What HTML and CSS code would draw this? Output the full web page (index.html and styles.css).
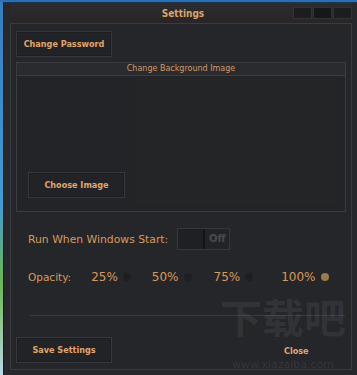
FILE: index.html
```html
<!DOCTYPE html>
<html>
<head>
<meta charset="utf-8">
<link rel="stylesheet" href="styles.css">
</head>
<body>
<div class="desktop">
  <div class="stripe"></div>
  <div class="window">
    <div class="titlebar">
      <span class="title">Settings</span>
      <div class="winbtns"><span></span><span></span><span></span></div>
    </div>
    <div class="panel">
      <button class="btn pw">Change Password</button>
      <div class="group">
        <div class="group-head">Change Background Image</div>
        <div class="group-body">
          <div class="preview"></div>
          <button class="btn choose">Choose Image</button>
        </div>
      </div>
      <div class="run-row">
        <span class="label">Run When Windows Start:</span>
        <div class="toggle"><span class="knob"></span><span class="off">Off</span></div>
      </div>
      <div class="op-row">
        <span class="label op-label">Opacity:</span>
        <span class="opt o1">25%<i class="dot"></i></span>
        <span class="opt o2">50%<i class="dot"></i></span>
        <span class="opt o3">75%<i class="dot"></i></span>
        <span class="opt o4">100%<i class="dot on"></i></span>
      </div>
      <div class="sep"></div>
      <div class="bottom-row">
        <button class="btn save">Save Settings</button>
        <span class="close">Close</span>
      </div>
      <div class="wm">
        <span class="wm-big">下载吧</span>
        <span class="wm-url">www.xiazaiba.com</span>
      </div>
    </div>
  </div>
</div>
</body>
</html>
```
FILE: styles.css
```css
* { box-sizing: border-box; }
html, body { margin: 0; padding: 0; }
body {
  width: 357px; height: 375px; overflow: hidden;
  background: #2a6fb3;
  font-family: "DejaVu Sans", Verdana, sans-serif;
}
.desktop { display: flex; height: 375px; padding-top: 2px; }
.stripe {
  width: 3px; flex: none;
  background: linear-gradient(#2f7fc4 0%, #39a0d8 55%, #6bb84a 75%, #b8d8e8 100%);
}
.window {
  flex: 1; display: flex; flex-direction: column;
  background: #27282c;
  border-top: 1px solid #1c3550;
  border-left: 1px solid #1a1b1e;
  padding: 0 5px 5px 6px;
}
.titlebar {
  height: 20px; flex: none; position: relative;
  display: flex; align-items: center; justify-content: center;
  background: linear-gradient(#2b2c30, #2a2526);
}
.title {
  color: #d9a46c; font-weight: bold; font-size: 10px; margin-left: 4px;
  font-family: "DejaVu Sans Condensed", "DejaVu Sans", sans-serif;
}
.winbtns {
  position: absolute; right: 0; top: 4px; display: flex; gap: 1px;
}
.winbtns span {
  width: 19px; height: 12px; background: #1c1d20; border: 1px solid #323338;
}
.winbtns span:nth-child(2) { background: #161719; }
.panel {
  flex: 1; position: relative;
  border: 1px solid #3a3b40;
  background: #25262a;
  padding: 7px 5px 0 5px;
  display: flex; flex-direction: column;
}
.btn {
  font-family: "DejaVu Sans Condensed", "DejaVu Sans", sans-serif;
  font-weight: bold; font-size: 9px; color: #e0a56c;
  background: #222327;
  border: 1px solid #37383d;
  box-shadow: inset 0 0 0 1px #1c1d20;
  height: 26px; padding: 0; text-align: center;
}
.pw { width: 96px; }
.group {
  margin-top: 5px; width: 330px;
  border: 1px solid #3b3c41;
  display: flex; flex-direction: column;
}
.group-head {
  height: 13px; line-height: 12px; text-align: center;
  font-size: 8px; color: #d39a66;
  background: #2a2b2f; border-bottom: 1px solid #3d3e43;
}
.group-body {
  height: 135px; position: relative; display: flex; align-items: flex-end;
  padding: 0 0 13px 11px; background: #232427;
}
.preview {
  position: absolute; left: 118px; top: 2px; right: 8px; bottom: 6px;
  background: #242527;
}
.choose { width: 97px; position: relative; }
.run-row {
  display: flex; align-items: center; margin-top: 16px; padding-left: 12px; height: 22px;
}
.label { color: #d8995c; font-size: 10.8px; }
.op-label { font-size: 10.5px; }
.toggle {
  margin-left: 9px; width: 53px; height: 22px; display: flex;
  border: 1px solid #36373b; background: #222327;
}
.knob { width: 27px; background: #1f2023; border-right: 2px solid #141517; }
.off { flex: 1; color: #4a4b50; font-size: 10px; font-weight: bold; line-height: 20px; text-align: center; }
.op-row {
  display: flex; align-items: center; margin-top: 18px; padding-left: 12px; height: 18px;
}
.opt { color: #d8995c; font-size: 12px; display: flex; align-items: center; }
.o1 { margin-left: 20px; }
.o2 { margin-left: 21px; }
.o3 { margin-left: 22px; }
.o4 { margin-left: 28px; }
.dot {
  width: 8px; height: 8px; border-radius: 50%; background: #1e1f22;
  margin-left: 5px; display: inline-block;
}
.dot.on { background: #9a7c4c; }
.sep {
  margin: 29px 0 0 14px; width: 315px; height: 1px; background: #3a3b40; flex: none;
}
.bottom-row {
  display: flex; align-items: center; margin-top: 21px;
}
.save { width: 96px; }
.close {
  margin-left: 172px; padding-top: 3px; line-height: 11px; font-weight: bold; font-size: 9px; color: #e0a56c;
  font-family: "DejaVu Sans Condensed", "DejaVu Sans", sans-serif;
}
.wm {
  position: absolute; left: 206px; top: 273px; width: 132px;
  display: flex; flex-direction: column; align-items: center; pointer-events: none;
}
.wm-big {
  font-family: "Noto Sans CJK SC", sans-serif; font-size: 40px; line-height: 38px;
  color: rgba(255,255,255,0.07); font-weight: bold;
  transform: scaleX(1.05);
}
.wm-url { font-size: 11px; line-height: 11px; color: rgba(255,255,255,0.09); margin-top: 24px; }
```
